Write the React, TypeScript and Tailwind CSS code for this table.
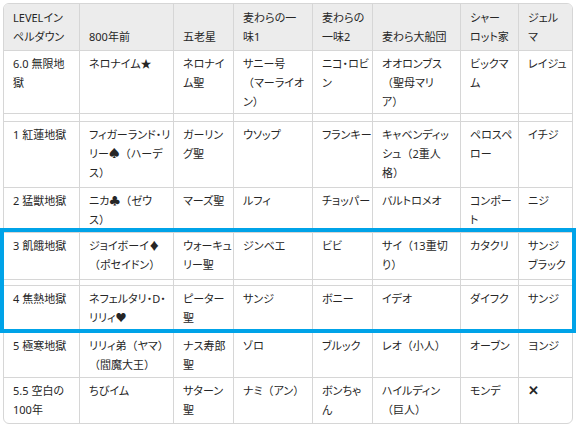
const gridCols = 'grid grid-cols-[76px_94px_60px_79px_60px_88px_58px_53px]'

const header = [
  'LEVELイン\nペルダウン',
  '800年前',
  '五老星',
  '麦わらの一\n味1',
  '麦わらの\n一味2',
  '麦わら大船団',
  'シャー\nロット家',
  'ジェル\nマ',
]

type Row = { h: string; cells: string[] }

const rows: Row[] = [
  {
    h: 'h-[63px]',
    cells: ['6.0 無限地\n獄', 'ネロナイム★', 'ネロナイ\nム聖', 'サニー号\n（マーライオ\nン）', 'ニコ・ロビ\nン', 'オオロンブス\n（聖母マリ\nア）', 'ビックマ\nム', 'レイジュ'],
  },
  { h: 'h-[8px]', cells: ['', '', '', '', '', '', '', ''] },
  {
    h: 'h-[66px]',
    cells: ['1 紅蓮地獄', 'フィガーランド・リ\nリー♠（ハーデ\nス）', 'ガーリン\nグ聖', 'ウソップ', 'フランキー', 'キャベンディッ\nシュ（2重人\n格）', 'ペロスペ\nロー', 'イチジ'],
  },
  {
    h: 'h-[45px]',
    cells: ['2 猛獣地獄', 'ニカ♣（ゼウ\nス）', 'マーズ聖', 'ルフィ', 'チョッパー', 'バルトロメオ', 'コンポー\nト', 'ニジ'],
  },
  {
    h: 'h-[47px]',
    cells: ['3 飢餓地獄', 'ジョイボーイ♦\n（ポセイドン）', 'ウォーキュ\nリー聖', 'ジンベエ', 'ビビ', 'サイ（13重切\nり）', 'カタクリ', 'サンジ\nブラック'],
  },
  { h: 'h-[6px]', cells: ['', '', '', '', '', '', '', ''] },
  {
    h: 'h-[47px]',
    cells: ['4 焦熱地獄', 'ネフェルタリ・D・\nリリィ♥', 'ピーター\n聖', 'サンジ', 'ボニー', 'イデオ', 'ダイフク', 'サンジ'],
  },
  {
    h: 'h-[45px]',
    cells: ['5 極寒地獄', 'リリィ弟（ヤマ）\n（閻魔大王）', 'ナス寿郎\n聖', 'ゾロ', 'ブルック', 'レオ（小人）', 'オーブン', 'ヨンジ'],
  },
  {
    h: 'h-[45px]',
    cells: ['5.5 空白の\n100年', 'ちびイム', 'サターン\n聖', 'ナミ（アン）', 'ボンちゃ\nん', 'ハイルディン\n（巨人）', 'モンデ', '✕'],
  },
]

// one block per line; full-width brackets keep their full width, kana stay proportional
function CellText({ text }: { text: string }) {
  if (!text) return null
  return (
    <>
      {text.split('\n').map((line, l) => (
        <div key={l} className="whitespace-nowrap">
          {line.split(/([（）✕])/).map((p, i) =>
            p === '（' || p === '）' ? (
              <span key={i} className="[font-feature-settings:normal]">{p}</span>
            ) : p === '✕' ? (
              <span key={i} className="text-[13px] font-bold">{p}</span>
            ) : (
              p
            )
          )}
        </div>
      ))}
    </>
  )
}

function App() {
  return (
    <div className="relative w-[578px] h-[429px] bg-white pt-[3px] pl-[3px] font-['Noto_Sans','Noto_Sans_CJK_JP',sans-serif] text-[11px] leading-[19px] text-[#262626] [font-feature-settings:'palt']">
      <div className="w-[570px] border border-[#d6d6d6] rounded-md overflow-hidden">
        <div className={`${gridCols} h-[47px] bg-[#ececec]`}>
          {header.map((text, i) => (
            <div
              key={i}
              className={`flex flex-col justify-end pl-[9px] pb-[4px] border-b border-[#d6d6d6] ${i < 7 ? 'border-r' : ''}`}
            >
              <CellText text={text} />
            </div>
          ))}
        </div>
        {rows.map((row, r) => (
          <div key={r} className={`${gridCols} ${row.h}`}>
            {row.cells.map((text, i) => (
              <div
                key={i}
                className={`pl-[9px] pt-[3px] border-[#d6d6d6] ${i < 7 ? 'border-r' : ''} ${r < rows.length - 1 ? 'border-b' : ''}`}
              >
                <CellText text={text} />
              </div>
            ))}
          </div>
        ))}
      </div>
      {/* highlight box drawn over rows 3 and 4 */}
      <div className="absolute left-0 top-[228px] w-[576px] h-[105px] border-4 border-[#00a3e8] pointer-events-none" />
    </div>
  )
}

export default App
